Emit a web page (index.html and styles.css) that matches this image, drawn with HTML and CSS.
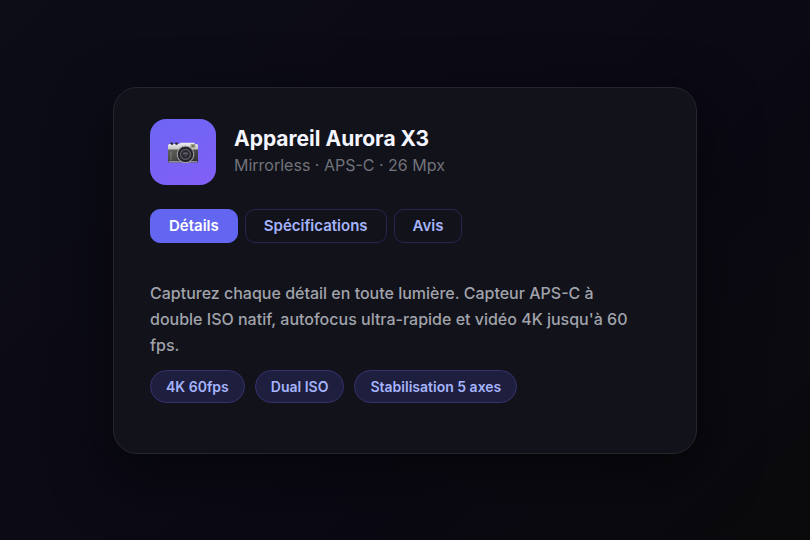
FILE: index.html
```html
<!DOCTYPE html>
<html lang="fr">
<head>
  <meta charset="UTF-8" />
  <meta name="viewport" content="width=device-width, initial-scale=1" />
  <title>Appareil Aurora X3</title>
  <link rel="stylesheet" href="styles.css">
</head>
<body>
  <main class="card">
    <header class="header">
      <div class="icon">
        <svg viewBox="0 0 32 22" aria-hidden="true">
          <defs>
            <linearGradient id="top" x1="0" y1="0" x2="0" y2="1">
              <stop offset="0" stop-color="#eeeef2" />
              <stop offset="1" stop-color="#b9b9b6" />
            </linearGradient>
            <linearGradient id="leather" x1="0" y1="0" x2="1" y2="1">
              <stop offset="0" stop-color="#60625b" />
              <stop offset="1" stop-color="#302f30" />
            </linearGradient>
          </defs>
          <rect x="3" y="0.5" width="3" height="3" rx="0.6" fill="#45436a" />
          <rect x="8" y="0.5" width="3" height="3" rx="0.6" fill="#45436a" />
          <path d="M1 3.5Q1 2 2.5 2H12L13.5 0.8H27L28 2H29.5Q31 2 31 3.5V9H1Z" fill="url(#top)" />
          <rect x="4" y="0.8" width="2" height="2" fill="#292936" />
          <rect x="8.5" y="0.8" width="2" height="2" fill="#292936" />
          <rect x="23.5" y="2" width="5" height="4" rx="0.8" fill="#a5a38a" />
          <rect x="24.8" y="3" width="2.5" height="2" fill="#77765e" />
          <path d="M1 7.5H31V19Q31 20.5 29.5 20.5H2.5Q1 20.5 1 19Z" fill="url(#leather)" />
          <path d="M2 19.8H30" stroke="#afb0b6" stroke-width="1" />
          <path d="M4 10V18" stroke="#888982" stroke-width="0.8" />
          <circle cx="18.5" cy="12.4" r="8.3" fill="#343238" stroke="#aaa9ad" stroke-width="1" />
          <circle cx="18.5" cy="12.4" r="6.5" fill="#4a4950" stroke="#1e1e23" stroke-width="1.2" />
          <circle cx="18.5" cy="12.4" r="4.8" fill="#26262b" stroke="#6c6a74" stroke-width="0.8" />
          <path d="M15.5 11.6Q18.5 8.8 21.5 11.6L20.5 12.8H16.5Z" fill="#62606c" />
          <circle cx="18.5" cy="13.5" r="1.7" fill="#3d3948" />
        </svg>
      </div>
      <div>
        <h1 class="title">Appareil Aurora X3</h1>
        <p class="subtitle">Mirrorless · APS-C · 26 Mpx</p>
      </div>
    </header>

    <div class="tabs" role="tablist">
      <button class="tab active" type="button" role="tab" id="tab-details" aria-selected="true" aria-controls="details">Détails</button>
      <button class="tab" type="button" role="tab" aria-selected="false">Spécifications</button>
      <button class="tab" type="button" role="tab" aria-selected="false">Avis</button>
    </div>

    <section class="panel" id="details" role="tabpanel" aria-labelledby="tab-details">
      <p class="description">Capturez chaque détail en toute lumière. Capteur APS-C à double ISO natif, autofocus ultra-rapide et vidéo 4K jusqu'à 60 fps.</p>
      <div class="chips">
        <span class="chip">4K 60fps</span>
        <span class="chip">Dual ISO</span>
        <span class="chip">Stabilisation 5 axes</span>
      </div>
    </section>
  </main>
</body>
</html>
```
FILE: styles.css
```css
* {
  box-sizing: border-box;
}

body {
  margin: 0;
  min-height: 100vh;
  padding: 20px;
  display: flex;
  align-items: center;
  justify-content: center;
  font-family: Inter, "Liberation Sans", sans-serif;
  background: linear-gradient(135deg, #0d0d18 0%, #0a0914 60%, #0a0a0c 100%);
  color: #f5f5ff;
}

.card {
  width: 100%;
  max-width: 584px;
  padding: 31px 36px 50px;
  border: 1px solid #25262d;
  border-radius: 24px;
  background: #11121a;
  box-shadow: 0 20px 60px rgba(0, 0, 0, 0.5);
}

.header {
  display: flex;
  align-items: center;
  gap: 18px;
  margin-bottom: 24px;
}

.icon {
  display: flex;
  align-items: center;
  justify-content: center;
  width: 66px;
  height: 66px;
  padding-top: 3px;
  border-radius: 16px;
  background: linear-gradient(160deg, #6d66f4, #825ff6);
}

.icon svg {
  width: 32px;
  height: 22px;
}

.title {
  margin: 0;
  font-size: 21px;
  line-height: 26px;
  font-weight: 700;
}

.subtitle {
  margin: 0;
  font-size: 16px;
  line-height: 26px;
  color: #71727a;
}

.tabs {
  display: flex;
  flex-wrap: wrap;
  gap: 7px;
  margin-bottom: 37px;
}

.tab {
  padding: 7px 18px;
  border: 1px solid #292550;
  border-radius: 10px;
  background: transparent;
  font-family: inherit;
  font-size: 15px;
  line-height: 18px;
  font-weight: 600;
  color: #a5b4fc;
  cursor: pointer;
}

.tab.active {
  border-color: #6366f1;
  background: #6366f1;
  color: #fff;
}

.description {
  max-width: 490px;
  margin: 0 0 12px;
  font-size: 16px;
  line-height: 26px;
  font-weight: 500;
  color: #a1a3ab;
}

.chips {
  display: flex;
  flex-wrap: wrap;
  gap: 10px;
}

.chip {
  padding: 7px 15px;
  border: 1px solid #383170;
  border-radius: 999px;
  background: #1e1e3e;
  font-size: 14px;
  line-height: 17px;
  font-weight: 600;
  color: #a5b4fc;
}
```
